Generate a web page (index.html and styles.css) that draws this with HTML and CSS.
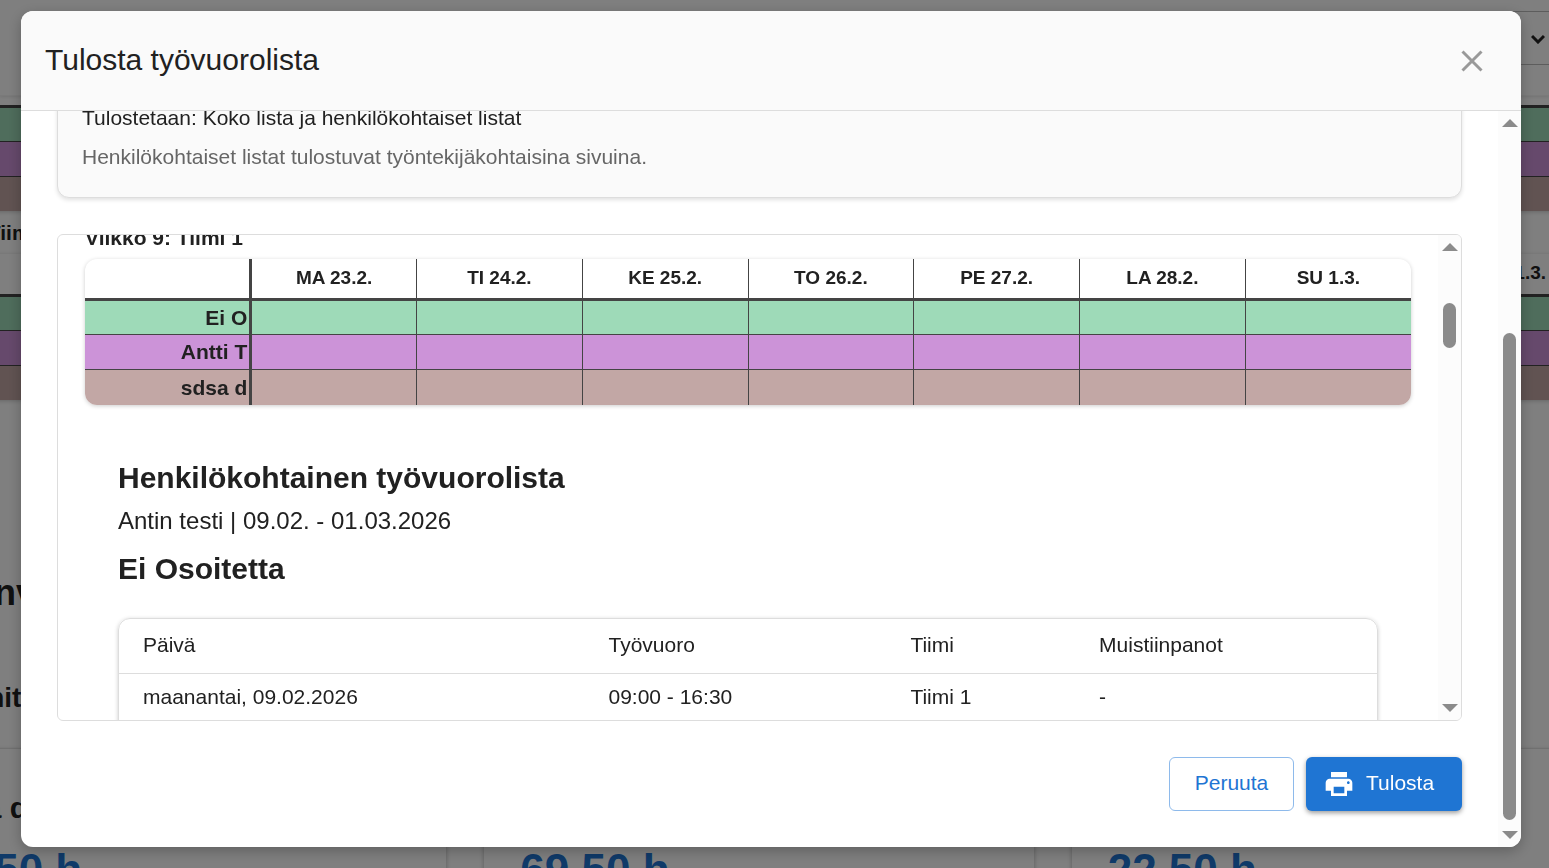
FILE: index.html
```html
<!DOCTYPE html>
<html lang="fi">
<head>
<meta charset="utf-8">
<meta name="viewport" content="width=device-width, initial-scale=1">
<title>Tulosta työvuorolista</title>
<link rel="stylesheet" href="styles.css">
</head>
<body>
<div class="app" aria-hidden="true" inert>
  <div class="app-toolbar">
    <select class="app-select" aria-label="Näkymä"><option></option></select>
    <svg class="app-chevron" viewBox="0 0 14 10" width="14" height="10"><path d="M1 2l6 6 6-6" fill="none" stroke="#222" stroke-width="3"/></svg>
  </div>
  <main class="app-content">
    <table class="week week-first">
      <thead><tr><th></th><th></th><th></th><th></th><th></th><th></th><th></th><th></th></tr></thead>
      <tbody>
        <tr class="green"><th></th><td></td><td></td><td></td><td></td><td></td><td></td><td></td></tr>
        <tr class="purple"><th></th><td></td><td></td><td></td><td></td><td></td><td></td><td></td></tr>
        <tr class="brown"><th></th><td></td><td></td><td></td><td></td><td></td><td></td><td></td></tr>
      </tbody>
    </table>
    <h3 class="week-title">Viikko 9: Tiimi 1</h3>
    <table class="week">
      <thead><tr><th></th><th></th><th></th><th></th><th></th><th></th><th></th><th>SU 1.3.</th></tr></thead>
      <tbody>
        <tr class="green"><th></th><td></td><td></td><td></td><td></td><td></td><td></td><td></td></tr>
        <tr class="purple"><th></th><td></td><td></td><td></td><td></td><td></td><td></td><td></td></tr>
        <tr class="brown"><th></th><td></td><td></td><td></td><td></td><td></td><td></td><td></td></tr>
      </tbody>
    </table>
    <h1 class="summary-title">Yhteenveto</h1>
    <h2 class="summary-subtitle">Työtunnit</h2>
    <div class="cards">
      <section class="card"><h3 class="card-name">sdsa d</h3><p class="card-hours">37,50 h</p></section>
      <section class="card"><h3 class="card-name">Ei O</h3><p class="card-hours">69,50 h</p></section>
      <section class="card"><h3 class="card-name">Antti T</h3><p class="card-hours">22,50 h</p></section>
    </div>
  </main>
</div>

<div class="backdrop">
  <div class="dialog" role="dialog" aria-modal="true" aria-labelledby="dialog-title">
    <header class="dialog-header">
      <h2 class="dialog-title" id="dialog-title">Tulosta työvuorolista</h2>
      <button class="close" type="button" aria-label="Sulje">
        <svg viewBox="0 0 22 22" width="22" height="22"><path d="M1.5 1.5l19 19M20.5 1.5l-19 19" fill="none" stroke="#999" stroke-width="3"/></svg>
      </button>
    </header>
    <div class="dialog-main">
      <div class="dialog-body">
        <section class="info">
          <p class="info-title">Tulostetaan: Koko lista ja henkilökohtaiset listat</p>
          <p class="info-text">Henkilökohtaiset listat tulostuvat työntekijäkohtaisina sivuina.</p>
        </section>
        <div class="preview">
          <div class="preview-content">
            <h3 class="week-title">Viikko 9: Tiimi 1</h3>
            <table class="week">
              <thead><tr><th></th><th>MA 23.2.</th><th>TI 24.2.</th><th>KE 25.2.</th><th>TO 26.2.</th><th>PE 27.2.</th><th>LA 28.2.</th><th>SU 1.3.</th></tr></thead>
              <tbody>
                <tr class="green"><th>Ei O</th><td></td><td></td><td></td><td></td><td></td><td></td><td></td></tr>
                <tr class="purple"><th>Antti T</th><td></td><td></td><td></td><td></td><td></td><td></td><td></td></tr>
                <tr class="brown"><th>sdsa d</th><td></td><td></td><td></td><td></td><td></td><td></td><td></td></tr>
              </tbody>
            </table>
            <section class="personal">
              <h2 class="personal-title">Henkilökohtainen työvuorolista</h2>
              <p class="personal-range">Antin testi | 09.02. - 01.03.2026</p>
              <h2 class="personal-title">Ei Osoitetta</h2>
              <div class="shifts-card">
                <table class="shifts">
                  <colgroup><col class="col-day"><col class="col-shift"><col class="col-team"><col class="col-notes"></colgroup>
                  <thead><tr><th>Päivä</th><th>Työvuoro</th><th>Tiimi</th><th>Muistiinpanot</th></tr></thead>
                  <tbody><tr><td>maanantai, 09.02.2026</td><td>09:00 - 16:30</td><td>Tiimi 1</td><td>-</td></tr></tbody>
                </table>
              </div>
            </section>
          </div>
          <div class="scrollbar">
            <span class="arrow arrow-up"></span>
            <div class="track track-preview"><div class="thumb"></div></div>
            <span class="arrow arrow-down"></span>
          </div>
        </div>
        <div class="actions">
          <button class="btn btn-outlined" type="button">Peruuta</button>
          <button class="btn btn-primary" type="button">
            <svg viewBox="0 0 24 24" width="32" height="32"><path fill="#fff" d="M19 8H5c-1.660 0-3 1.340-3 3v6h4v4h12v-4h4v-6c0-1.660-1.340-3-3-3zm-3 11H8v-5h8v5zm3-7c-.550 0-1-.450-1-1s.450-1 1-1 1 .450 1 1-.450 1-1 1zm-1-9H6v4h12V3z"/></svg>
            <span>Tulosta</span>
          </button>
        </div>
      </div>
      <div class="scrollbar">
        <span class="arrow arrow-up"></span>
        <div class="track track-dialog"><div class="thumb"></div></div>
        <span class="arrow arrow-down"></span>
      </div>
    </div>
  </div>
</div>
</body>
</html>
```
FILE: styles.css
```css
*, *::before, *::after { box-sizing: border-box; }

body {
  margin: 0;
  height: 100vh;
  overflow: hidden;
  font-family: "Liberation Sans", Arial, sans-serif;
  font-size: 21px;
  line-height: 30px;
  color: #212121;
  background: #fff;
}

h1, h2, h3, p { margin: 0; }

button, select { font: inherit; }

/* Page under the dialog, scrolled sideways */
.app { height: 100vh; overflow: hidden; }

.app-toolbar {
  position: relative;
  z-index: 1;
  display: flex;
  justify-content: flex-end;
  align-items: flex-start;
  height: 96px;
  padding-top: 11px;
  background: #fff;
  border-bottom: 1px solid #f4f4f4;
  box-shadow: 0 1px 3px rgba(0, 0, 0, .1);
}

.app-select {
  appearance: none;
  width: 240px;
  height: 54px;
  border: 1px solid #bbb;
  border-right: 0;
  background: #fff;
}

.app-chevron { position: absolute; right: 4px; top: 34px; }

.app-content { width: calc(100% + 177px); margin-left: -104px; }

.week-first { margin-top: -31px; margin-bottom: 7px; }

.summary-title { margin-top: 171px; font-size: 36px; line-height: 44px; }

.summary-subtitle { margin-top: 65px; font-size: 28px; line-height: 36px; }

.cards {
  display: grid;
  grid-template-columns: repeat(3, 1fr);
  gap: 36px;
  margin-top: 32px;
}

.card {
  padding: 39px 36px;
  border: 1px solid #e0e0e0;
  box-shadow: 0 1px 4px rgba(0, 0, 0, .2);
}

.card-name { font-size: 30px; line-height: 40px; }

.card-hours {
  margin-top: 16px;
  font-size: 44px;
  font-weight: bold;
  line-height: 52px;
  color: #1f75d3;
}

/* Week schedule */
.week-title { font-size: 21px; line-height: 30px; margin-bottom: 6px; }

.week {
  width: 100%;
  table-layout: fixed;
  border-collapse: collapse;
  border-radius: 12px;
  overflow: hidden;
  box-shadow: 0 1px 4px rgba(0, 0, 0, .2);
}

.week th, .week td { padding: 0; height: 35px; }

.week thead th {
  height: 41px;
  padding-bottom: 2px;
  font-size: 19px;
  border-bottom: 3px solid #444;
  border-right: 1px solid #444;
}

.week tbody th { text-align: right; padding-right: 2px; }

.week thead th:first-child, .week tbody th { border-right: 3px solid #444; }

.week td { border-right: 1px solid #444; }

.week tr > :last-child { border-right: 0; }

.week tbody tr + tr > * { border-top: 1px solid #444; }

.green { background: #9edab8; }
.purple { background: #cc93d8; }
.brown { background: #c2a7a5; }

.app .week td { border-right-color: transparent; }

/* Dialog */
.backdrop {
  position: fixed;
  inset: 0;
  z-index: 2;
  display: flex;
  padding: 11px 28px 21px 21px;
  background: rgba(0, 0, 0, .5);
}

.dialog {
  flex: 1;
  min-width: 0;
  display: flex;
  flex-direction: column;
  overflow: hidden;
  border-radius: 12px;
  background: #fff;
  box-shadow: 0 4px 14px rgba(0, 0, 0, .25);
}

.dialog-header {
  display: flex;
  justify-content: space-between;
  align-items: center;
  padding: 24px;
  background: #fafafa;
  border-bottom: 1px solid #ddd;
}

.dialog-title {
  padding-bottom: 2px;
  font-size: 30px;
  font-weight: normal;
  line-height: 49px;
}

.close {
  display: flex;
  padding: 14px;
  border: 0;
  background: none;
}

.dialog-main { flex: 1; min-height: 0; display: flex; }

.dialog-body {
  flex: 1;
  min-width: 0;
  display: flex;
  flex-direction: column;
  justify-content: flex-end;
  gap: 36px;
  padding: 0 36px 36px;
  overflow: hidden;
}

.info {
  flex: none;
  padding: 24px 24px 25px;
  border: 1px solid #ddd;
  border-radius: 12px;
  background: #fafafa;
  box-shadow: 0 2px 4px rgba(0, 0, 0, .12);
}

.info-text { margin-top: 9px; color: #666; }

.preview {
  flex: none;
  display: flex;
  height: calc(56vh + 1px);
  border: 1px solid #ddd;
  border-radius: 6px;
  overflow: hidden;
}

.preview-content {
  flex: 1;
  min-width: 0;
  margin-top: -12px;
  padding: 0 27px;
}

.personal { padding: 51px 33px 0; }

.personal-title { font-size: 30px; line-height: 44px; }

.personal-range { margin: 1px 0 7px; font-size: 24px; line-height: 39px; }

.shifts-card {
  margin-top: 27px;
  border: 1px solid #ddd;
  border-radius: 12px;
  box-shadow: 0 1px 4px rgba(0, 0, 0, .2);
}

.shifts { width: 100%; table-layout: fixed; border-collapse: collapse; }

.shifts th, .shifts td {
  padding: 8px 24px 24px;
  text-align: left;
  font-weight: normal;
}

.shifts th { padding: 11px 24px 13px; border-bottom: 1px solid #ddd; }

.col-day { width: 37%; }
.col-shift { width: 24%; }
.col-team { width: 15%; }
.col-notes { width: 24%; }

/* Scroll bars */
.scrollbar {
  flex: none;
  display: flex;
  flex-direction: column;
  align-items: center;
  width: 23px;
  padding: 8px 0;
  background: #fcfcfc;
}

.arrow {
  border-left: 8px solid transparent;
  border-right: 8px solid transparent;
}

.arrow-up { border-bottom: 8px solid #8b8b8b; }
.arrow-down { border-top: 8px solid #8b8b8b; }

.track { flex: 1; width: 13px; display: flex; flex-direction: column; margin: 11px 0; }

.thumb { flex: none; border-radius: 7px; background: #8b8b8b; }

.track-preview { padding-top: 41px; }
.track-preview .thumb { height: 45px; }

.track-dialog { justify-content: flex-end; }
.track-dialog .thumb { height: calc(71% + 3px); }

/* Actions */
.actions { display: flex; justify-content: flex-end; gap: 12px; }

.btn {
  display: flex;
  align-items: center;
  justify-content: center;
  min-height: 54px;
  border-radius: 6px;
}

.btn-outlined {
  min-width: 125px;
  padding-bottom: 3px;
  border: 1px solid #8ebaeb;
  background: #fff;
  color: #1f75d3;
}

.btn-primary {
  justify-content: flex-start;
  min-width: 156px;
  gap: 11px;
  padding: 0 24px 0 17px;
  border: 0;
  background: #1f75d3;
  color: #fff;
  box-shadow: 0 2px 5px rgba(0, 0, 0, .4);
}

.btn-primary span { padding-bottom: 2px; }
```
